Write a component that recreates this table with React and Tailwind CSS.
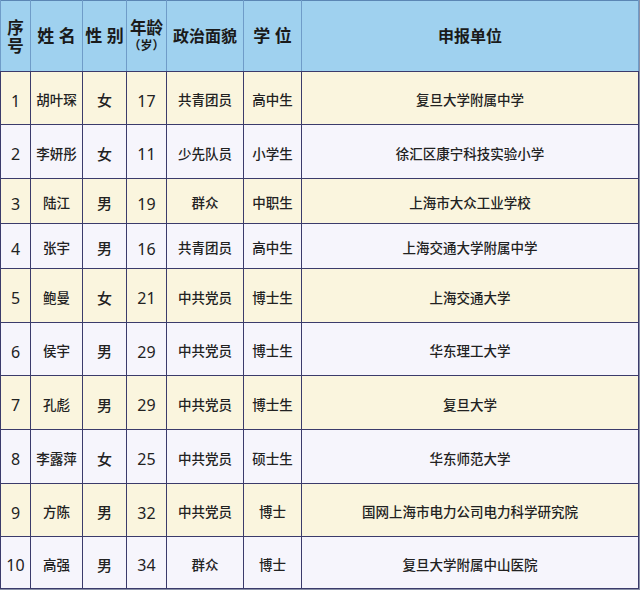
import React from "react";

const rows = [
  ["1", "胡叶琛", "女", "17", "共青团员", "高中生", "复旦大学附属中学", "h-[53px]"],
  ["2", "李妍彤", "女", "11", "少先队员", "小学生", "徐汇区康宁科技实验小学", "h-[54px]"],
  ["3", "陆江", "男", "19", "群众", "中职生", "上海市大众工业学校", "h-[45px]"],
  ["4", "张宇", "男", "16", "共青团员", "高中生", "上海交通大学附属中学", "h-[45px]"],
  ["5", "鲍曼", "女", "21", "中共党员", "博士生", "上海交通大学", "h-[54px]"],
  ["6", "侯宇", "男", "29", "中共党员", "博士生", "华东理工大学", "h-[53px]"],
  ["7", "孔彪", "男", "29", "中共党员", "博士生", "复旦大学", "h-[54px]"],
  ["8", "李露萍", "女", "25", "中共党员", "硕士生", "华东师范大学", "h-[54px]"],
  ["9", "方陈", "男", "32", "中共党员", "博士", "国网上海市电力公司电力科学研究院", "h-[53px]"],
  ["10", "高强", "男", "34", "群众", "博士", "复旦大学附属中山医院", "h-[52px]"],
];

const th = "border-x border-x-[#6f9cc8] border-b border-b-[#3b3b6b] font-bold text-[16px] text-[#1a1a1a] text-center align-middle p-0";
const td = "border border-[#3b3b6b] text-center align-middle p-0 pt-[5px]";

export default function App() {
  return (
    <div
      className="w-[640px] h-[590px] bg-[#8a91a8] overflow-hidden"
      style={{ fontFamily: '"Noto Sans", "Noto Sans CJK SC", sans-serif' }}
    >
      <table className="table-fixed border-collapse w-[638px] bg-white">
        <colgroup>
          <col className="w-[30px]" />
          <col className="w-[52px]" />
          <col className="w-[44px]" />
          <col className="w-[40px]" />
          <col className="w-[77px]" />
          <col className="w-[58px]" />
          <col className="w-[337px]" />
        </colgroup>
        <thead>
          <tr className="h-[71px] bg-[#9fd1ef] border-t border-t-[#5b86b4]">
            <th className={th}>
              <div className="text-[16.5px] leading-[17px]">序</div>
              <div className="text-[16.5px] leading-[17px] mt-[1px]">号</div>
            </th>
            <th className={th + " text-[17px]"}>姓 名</th>
            <th className={th + " text-[17px]"}>性 别</th>
            <th className={th}>
              <div className="text-[16.5px] leading-[17px]">年龄</div>
              <div className="text-[12px] leading-[15px] mt-[2px]">（岁）</div>
            </th>
            <th className={th}>政治面貌</th>
            <th className={th + " text-[17px]"}>学 位</th>
            <th className={th}>申报单位</th>
          </tr>
        </thead>
        <tbody>
          {rows.map((r, i) => (
            <tr
              key={r[0]}
              className={
                r[7] + " " + (i % 2 === 0 ? "bg-[#faf5de]" : "bg-[#f6f5fc]")
              }
            >
              <td className={td + " text-[16px] text-[#222]"}>{r[0]}</td>
              <td className={td + " text-[13.5px] font-medium text-[#222]"}>{r[1]}</td>
              <td className={td + " text-[15px] font-medium text-[#222]"}>{r[2]}</td>
              <td className={td + " text-[16px] text-[#222]"}>{r[3]}</td>
              <td className={td + " text-[13.5px] font-medium text-[#222]"}>{r[4]}</td>
              <td className={td + " text-[13.5px] font-medium text-[#222]"}>{r[5]}</td>
              <td className={td + " text-[13.5px] font-medium text-[#222]"}>{r[6]}</td>
            </tr>
          ))}
        </tbody>
      </table>
    </div>
  );
}
